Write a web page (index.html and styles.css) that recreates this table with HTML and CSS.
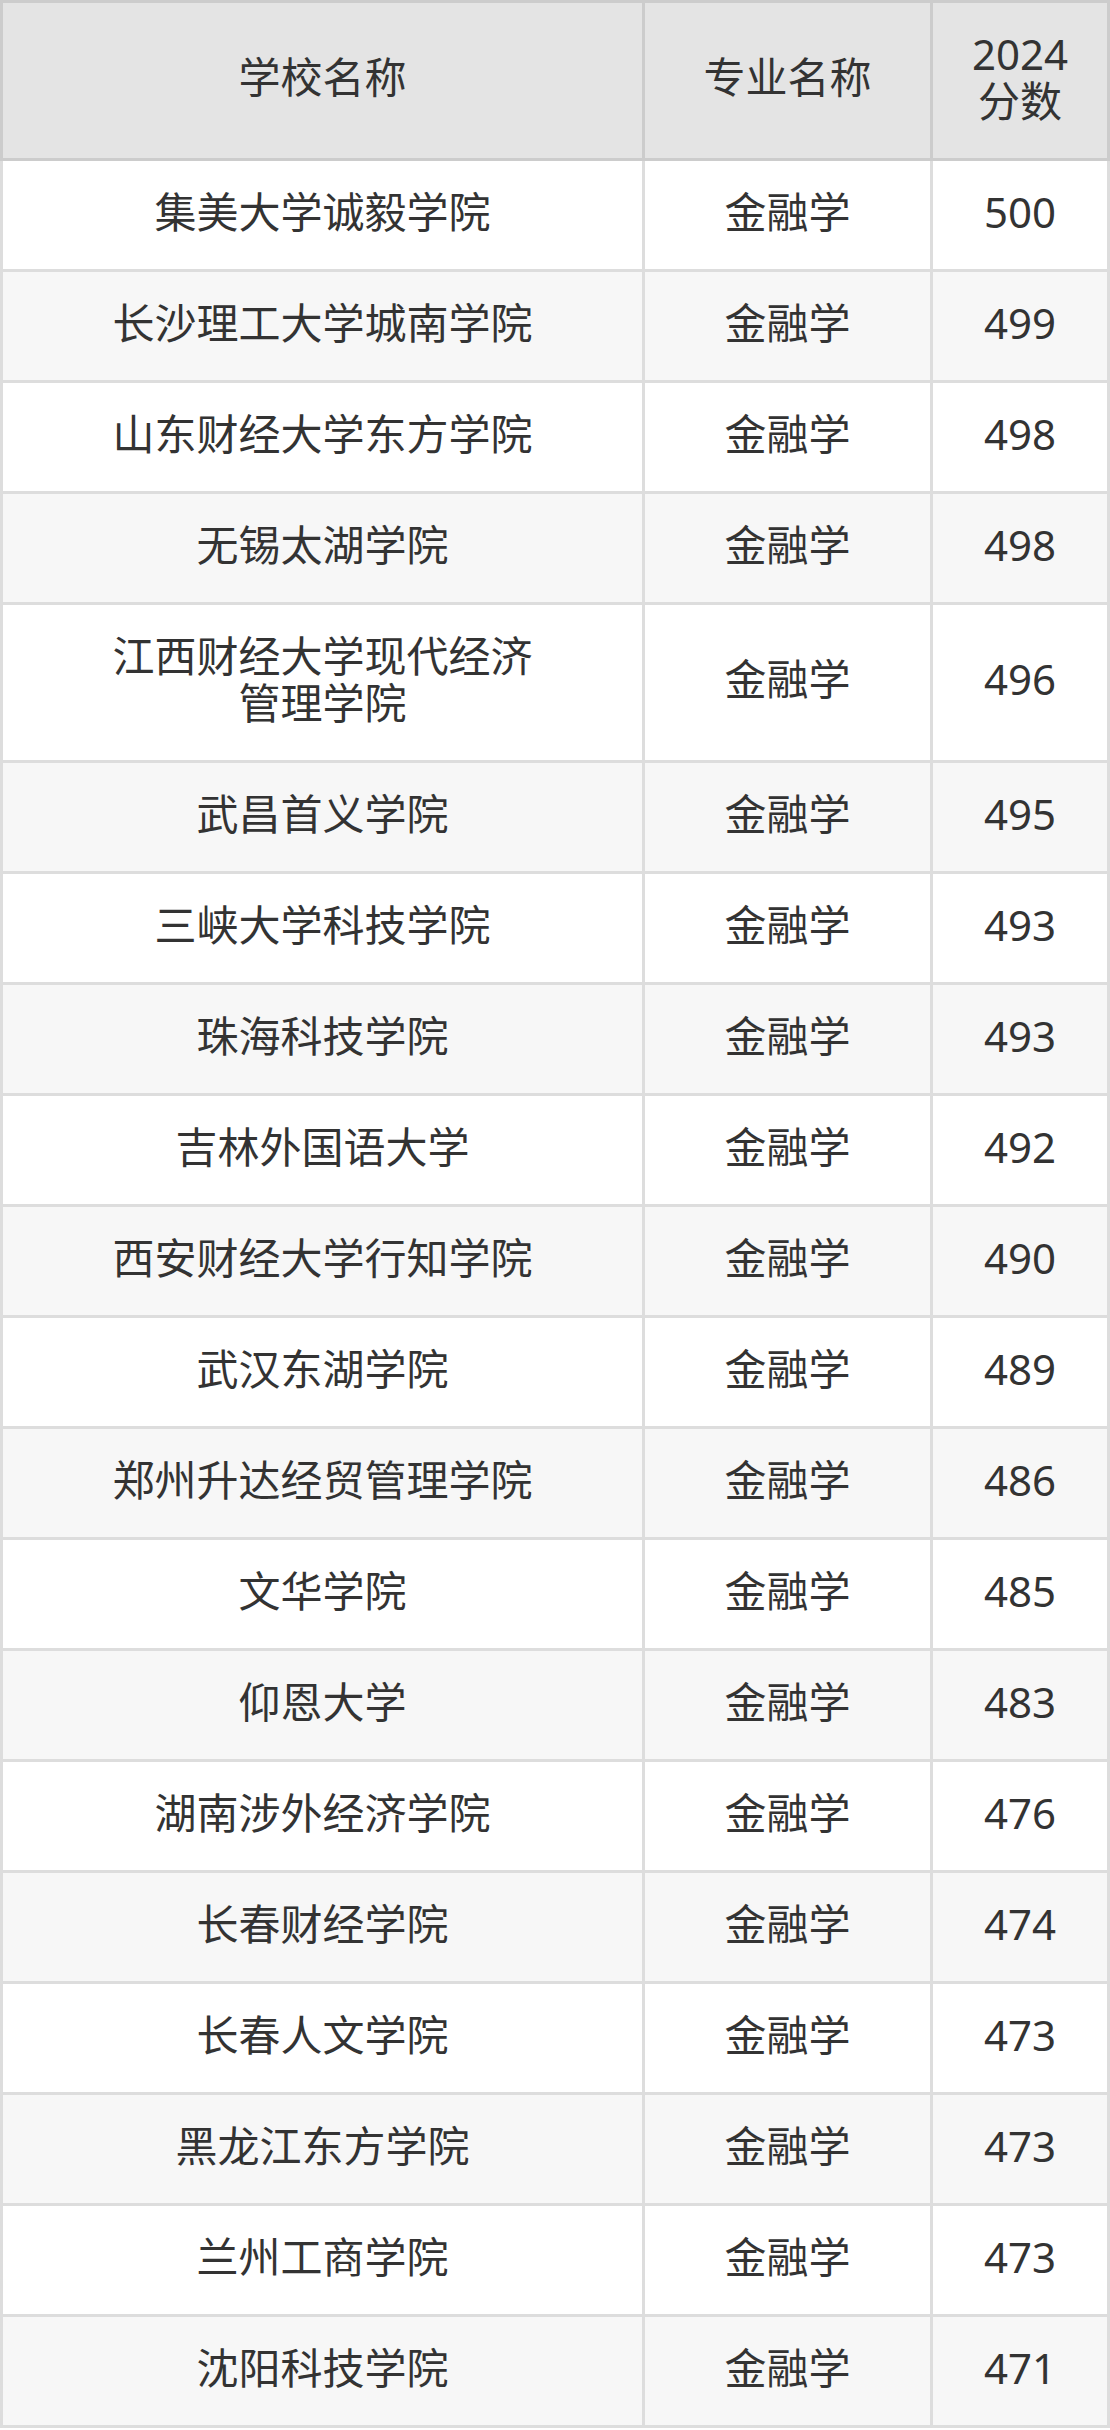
FILE: index.html
```html
<!DOCTYPE html>
<html lang="zh-CN">
<head>
<meta charset="utf-8">
<title>2024分数</title>
<link rel="stylesheet" href="styles.css">
</head>
<body>
<table class="score-table">
  <colgroup>
    <col class="col-school">
    <col class="col-major">
    <col class="col-score">
  </colgroup>
  <thead>
    <tr><th class="school">学校名称</th><th>专业名称</th><th>2024<br>分数</th></tr>
  </thead>
  <tbody>
    <tr><td class="school">集美大学诚毅学院</td><td>金融学</td><td>500</td></tr>
    <tr><td class="school">长沙理工大学城南学院</td><td>金融学</td><td>499</td></tr>
    <tr><td class="school">山东财经大学东方学院</td><td>金融学</td><td>498</td></tr>
    <tr><td class="school">无锡太湖学院</td><td>金融学</td><td>498</td></tr>
    <tr><td class="school">江西财经大学现代经济管理学院</td><td>金融学</td><td>496</td></tr>
    <tr><td class="school">武昌首义学院</td><td>金融学</td><td>495</td></tr>
    <tr><td class="school">三峡大学科技学院</td><td>金融学</td><td>493</td></tr>
    <tr><td class="school">珠海科技学院</td><td>金融学</td><td>493</td></tr>
    <tr><td class="school">吉林外国语大学</td><td>金融学</td><td>492</td></tr>
    <tr><td class="school">西安财经大学行知学院</td><td>金融学</td><td>490</td></tr>
    <tr><td class="school">武汉东湖学院</td><td>金融学</td><td>489</td></tr>
    <tr><td class="school">郑州升达经贸管理学院</td><td>金融学</td><td>486</td></tr>
    <tr><td class="school">文华学院</td><td>金融学</td><td>485</td></tr>
    <tr><td class="school">仰恩大学</td><td>金融学</td><td>483</td></tr>
    <tr><td class="school">湖南涉外经济学院</td><td>金融学</td><td>476</td></tr>
    <tr><td class="school">长春财经学院</td><td>金融学</td><td>474</td></tr>
    <tr><td class="school">长春人文学院</td><td>金融学</td><td>473</td></tr>
    <tr><td class="school">黑龙江东方学院</td><td>金融学</td><td>473</td></tr>
    <tr><td class="school">兰州工商学院</td><td>金融学</td><td>473</td></tr>
    <tr><td class="school">沈阳科技学院</td><td>金融学</td><td>471</td></tr>
  </tbody>
</table>
</body>
</html>
```

FILE: styles.css
```css
html, body {
  margin: 0;
  padding: 0;
  background: #ffffff;
}

.score-table {
  width: 1110px;
  table-layout: fixed;
  border-collapse: collapse;
  font-family: "Noto Sans", "Noto Sans CJK SC", sans-serif;
  font-size: 42px;
  line-height: 47px;
  color: #333333;
}

.col-school { width: 642px; }
.col-major { width: 288px; }
.col-score { width: 177px; }

.score-table th,
.score-table td {
  padding: 26.5px 6px 34.5px;
  text-align: center;
  vertical-align: middle;
  font-weight: normal;
}

.score-table th {
  background: #e4e4e4;
  border: 3px solid #cccccc;
}

.score-table td {
  border: 3px solid #dddddd;
}

.score-table th.school,
.score-table td.school {
  padding-left: 100px;
  padding-right: 100px;
}

.score-table tbody tr:nth-child(odd) td {
  background: #ffffff;
}

.score-table tbody tr:nth-child(even) td {
  background: #f7f7f7;
}
```
